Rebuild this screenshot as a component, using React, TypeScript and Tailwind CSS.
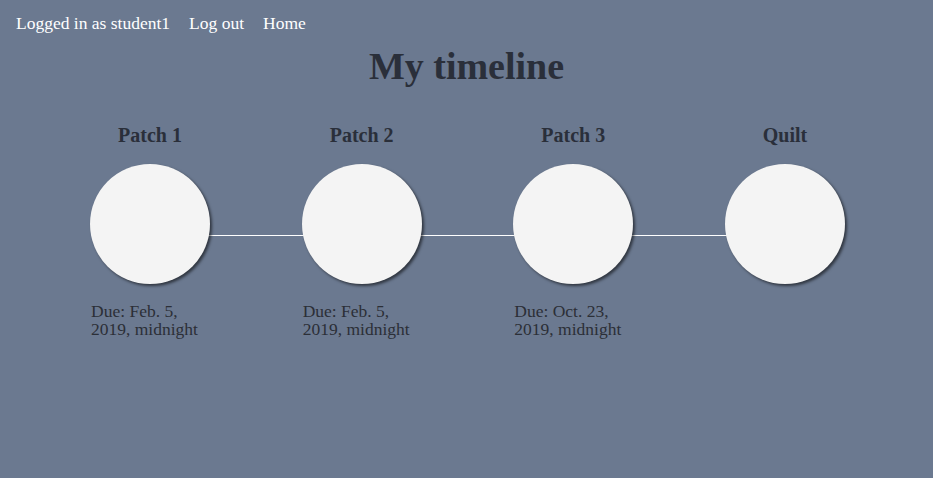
import React from "react";

const items = [
  { title: "Patch 1", due: "Due: Feb. 5, 2019, midnight" },
  { title: "Patch 2", due: "Due: Feb. 5, 2019, midnight" },
  { title: "Patch 3", due: "Due: Oct. 23, 2019, midnight" },
  { title: "Quilt", due: "" },
];

export default function App() {
  return (
    <div
      className="w-[933px] h-[478px] bg-[#6b7990] overflow-hidden"
      style={{ fontFamily: '"Liberation Serif", "Times New Roman", serif' }}
    >
      <nav className="flex gap-[19px] pl-[16px] pt-[13px] h-[33px] text-[17.5px] leading-[20px] text-white">
        <span>Logged in as student1</span>
        <span>Log out</span>
        <span>Home</span>
      </nav>
      <h1 className="mt-[13px] text-center text-[38px] leading-[40px] font-bold text-[#2a2f3a]">
        My timeline
      </h1>
      <div className="mt-[37px] flex pl-[90px]">
        {items.map((it, i) => (
          <React.Fragment key={it.title}>
            {i > 0 && (
              <div className="w-[91.67px] shrink-0 pt-[112px]">
                <div className="h-px bg-white -mx-[2px]" />
              </div>
            )}
            <div className="w-[120px] shrink-0 flex flex-col">
              <div className="text-center text-[20px] leading-[24px] font-bold text-[#2a2f3a] whitespace-nowrap">
                {it.title}
              </div>
              <div className="mt-[17px] w-[120px] h-[120px] rounded-full bg-[#f4f4f4] shadow-[2px_2px_3px_rgba(0,0,0,0.55)] relative z-10" />
              <div className="mt-[18px] text-[17.5px] leading-[18px] text-[#2b2f37] pl-px">
                {it.due}
              </div>
            </div>
          </React.Fragment>
        ))}
      </div>
    </div>
  );
}
